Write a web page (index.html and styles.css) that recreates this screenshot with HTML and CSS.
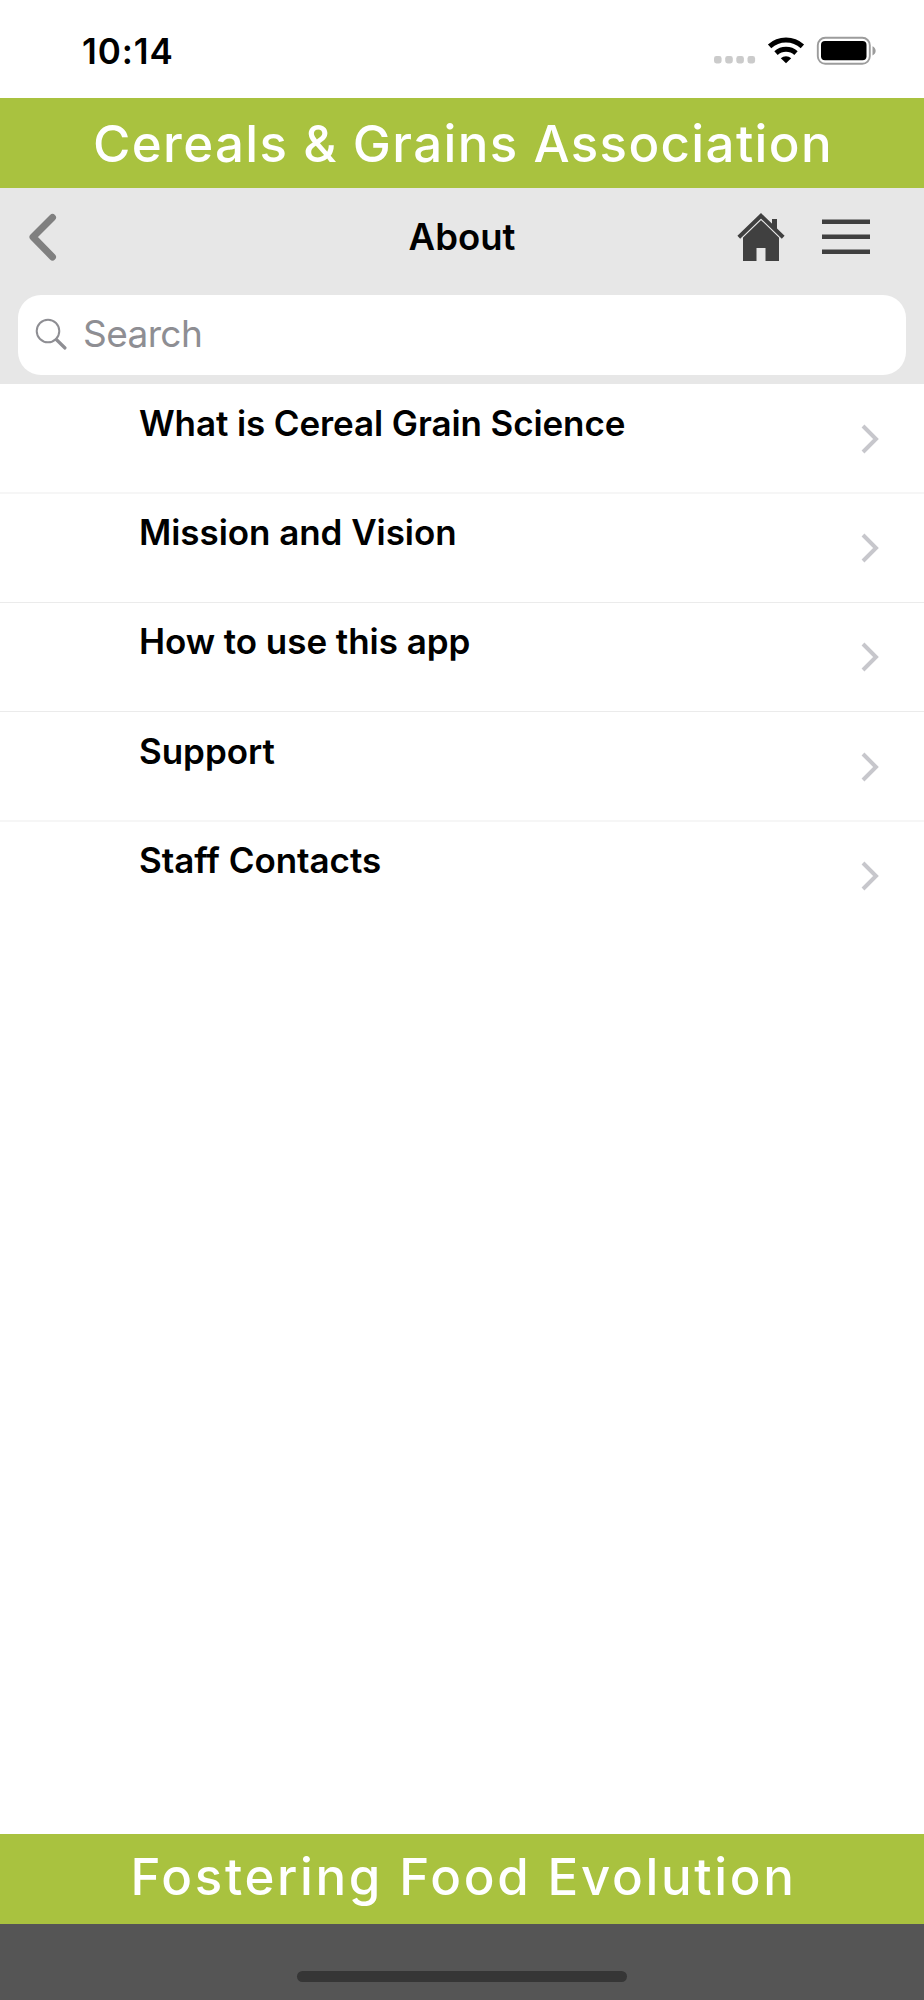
FILE: index.html
```html
<!DOCTYPE html>
<html lang="en">
<head>
  <meta charset="UTF-8" />
  <meta name="viewport" content="width=device-width, initial-scale=1.0" />
  <title>About</title>
  <link rel="stylesheet" href="styles.css">
</head>
<body>
  <div class="status-bar">
    <span class="time">10:14</span>
    <svg class="status-icons" width="164" height="30" viewBox="0 0 164 30">
      <g fill="#cbcbcb">
        <rect x="2" y="21" width="7.6" height="7.4" rx="2.4"/>
        <rect x="13.2" y="21" width="7.6" height="7.4" rx="2.4"/>
        <rect x="24.3" y="21" width="7.6" height="7.4" rx="2.4"/>
        <rect x="35.5" y="21" width="7.6" height="7.4" rx="2.4"/>
      </g>
      <path d="M57.6 11.4a24.5 24.5 0 0 1 32.8 0" fill="none" stroke="#000" stroke-width="5"/>
      <path d="M64 18.1a15 15 0 0 1 20 0" fill="none" stroke="#000" stroke-width="5"/>
      <path d="M68.8 23.2a8 8 0 0 1 10.4 0L74 28.3z"/>
      <rect x="105.8" y="2.8" width="52" height="26" rx="7.5" fill="none" stroke="#9c9c9c" stroke-width="1.9"/>
      <rect x="109" y="6" width="45.5" height="19.3" rx="4"/>
      <path d="M160.5 11.2c4.2 1.6 4.2 7.6 0 9.2z" fill="#9c9c9c"/>
    </svg>
  </div>

  <div class="banner banner-top">Cereals &amp; Grains Association</div>

  <div class="header">
    <div class="nav">
      <a class="back" href="#">
        <svg width="30" height="50" viewBox="0 0 30 50"><path d="M24.5 5.5L5 25l19.5 20" fill="none" stroke="#808080" stroke-width="7" stroke-linecap="round" stroke-linejoin="round"/></svg>
      </a>
      <h1>About</h1>
      <div class="actions">
        <svg width="48" height="50" viewBox="0 0 48 50" fill="#404040">
          <path d="M6 25L24 7l18 18v24H28.5V36h-9v13H6z"/>
          <path d="M2 26.3L24 5.1l22 21.2" fill="none" stroke="#e7e7e7" stroke-width="4.4"/>
          <path d="M35 7h5v12l-5-5z"/>
          <path d="M1.8 25.2L24 3.8l22.2 21.4" fill="none" stroke="#404040" stroke-width="4"/>
        </svg>
        <svg width="48" height="36" viewBox="0 0 48 36" fill="#404040">
          <rect y="0.5" width="48" height="4.5"/>
          <rect y="15.5" width="48" height="4.5"/>
          <rect y="30.5" width="48" height="4.5"/>
        </svg>
      </div>
    </div>
    <div class="search">
      <svg width="34" height="34" viewBox="0 0 34 34" fill="none" stroke="#8e8e93">
        <circle cx="14" cy="13" r="11.3" stroke-width="2"/>
        <path d="M22.3 21.5l8.7 8.5" stroke-width="3.2" stroke-linecap="round"/>
      </svg>
      <span>Search</span>
    </div>
  </div>

  <ul class="list">
    <li><span>What is Cereal Grain Science</span><svg class="chevron" viewBox="0 0 20 32"><path d="M3 3l13 13L3 29"/></svg></li>
    <li><span>Mission and Vision</span><svg class="chevron" viewBox="0 0 20 32"><path d="M3 3l13 13L3 29"/></svg></li>
    <li><span>How to use this app</span><svg class="chevron" viewBox="0 0 20 32"><path d="M3 3l13 13L3 29"/></svg></li>
    <li><span>Support</span><svg class="chevron" viewBox="0 0 20 32"><path d="M3 3l13 13L3 29"/></svg></li>
    <li><span>Staff Contacts</span><svg class="chevron" viewBox="0 0 20 32"><path d="M3 3l13 13L3 29"/></svg></li>
  </ul>

  <div class="banner banner-bottom">Fostering Food Evolution</div>
  <div class="home-bar"><div class="home-indicator"></div></div>
</body>
</html>
```
FILE: styles.css
```css
* {
  box-sizing: border-box;
}
body {
  font-family: Inter, 'Liberation Sans', sans-serif;
  background-color: white;
  color: black;
  margin: 0;
  display: flex;
  flex-direction: column;
  height: 2000px;
}
.status-bar {
  height: 98px;
  flex: none;
  padding: 0 48px 0 82px;
  display: flex;
  justify-content: space-between;
}
.time {
  font-size: 35px;
  font-weight: 600;
  line-height: 42px;
  letter-spacing: 0.9px;
  padding-top: 30px;
}
.status-icons {
  margin-top: 35px;
}
.banner {
  height: 90px;
  flex: none;
  background: #a9c23f;
  color: white;
  text-align: center;
  font-size: 51px;
  font-weight: 500;
  line-height: 91px;
  white-space: nowrap;
}
.banner-top {
  letter-spacing: 1.35px;
  padding-left: 2px;
}
.header {
  height: 196px;
  flex: none;
  background: #e7e7e7;
  padding: 0 18px;
}
.nav {
  height: 107px;
  display: grid;
  grid-template-columns: 1fr auto 1fr;
  align-items: start;
}
.back {
  padding: 24px 0 0 10px;
}
.back svg {
  display: block;
}
h1 {
  margin: 0;
  padding-top: 27px;
  font-size: 36.5px;
  font-weight: 600;
  line-height: 44px;
}
.actions {
  display: flex;
  justify-content: flex-end;
  gap: 37px;
  padding: 24px 36px 0 0;
}
.actions svg:last-child {
  margin-top: 7px;
}
.search {
  height: 80px;
  background: white;
  border-radius: 23px;
  display: flex;
  align-items: center;
  gap: 15px;
  padding-left: 16px;
  color: #8e8e93;
  font-size: 37px;
  letter-spacing: -0.6px;
}
.search svg {
  margin-top: -1px;
}
.search span {
  margin-top: -4px;
}
.list {
  list-style: none;
  margin: 0;
  padding: 0;
  flex: 1;
}
.list li {
  height: 109px;
  border-bottom: 1px solid #ebebeb;
  padding: 17px 44px 0 139px;
  display: flex;
  justify-content: space-between;
  font-size: 35px;
  font-weight: 600;
  line-height: 42px;
  letter-spacing: -0.05px;
}
.list li:nth-child(3n+1) {
  height: 110px;
  padding-top: 18px;
  border-bottom: 2px solid #f6f6f6;
}
.list li:first-child {
  letter-spacing: -0.1px;
}
.list li:last-child {
  border-bottom: none;
}
.chevron {
  width: 20px;
  height: 32px;
  margin-top: 21px;
  fill: none;
  stroke: #c7c7cc;
  stroke-width: 4;
}
.banner-bottom {
  letter-spacing: 2.65px;
  padding-left: 3px;
  line-height: 86px;
}
.home-bar {
  height: 76px;
  flex: none;
  background: #555;
  padding-top: 47px;
}
.home-indicator {
  width: 330px;
  height: 11px;
  margin: 0 auto;
  border-radius: 6px;
  background: #363636;
}
```
